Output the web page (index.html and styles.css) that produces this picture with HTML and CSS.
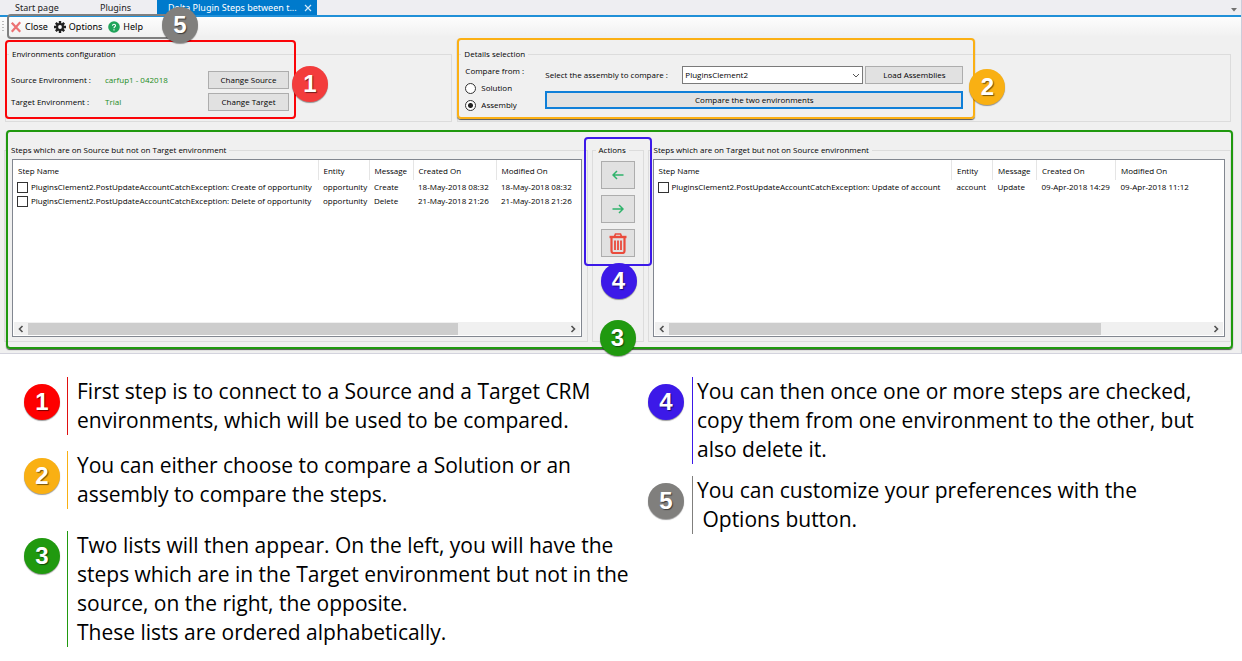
FILE: index.html
```html
<!DOCTYPE html>
<html lang="en">
<head>
<meta charset="utf-8">
<title>Delta Plugin Steps</title>
<link rel="stylesheet" href="styles.css">
</head>
<body>
<main class="app">
  <nav class="tabs">
    <button class="tab tab-start">Start page</button>
    <button class="tab tab-plugins">Plugins</button>
    <button class="tab tab-active"><span>Delta Plugin Steps between t...</span>
      <svg class="tab-close" viewBox="0 0 8 8"><path d="M1 1l6 6M7 1l-6 6" stroke="#d6ebfa" stroke-width="1.2"/></svg>
    </button>
    <svg class="tab-menu" viewBox="0 0 6 4"><path d="M0 0h6L3 3.500z" fill="#717171"/></svg>
  </nav>

  <div class="toolbar">
    <span class="grip"></span>
    <div class="tools">
      <button class="tool"><svg class="icon" viewBox="0 0 12 12"><path d="M2.500 2.500l7 7.500M9.500 2L2.500 10" stroke="#ec7273" stroke-width="2.200" stroke-linecap="square"/></svg>Close</button>
      <button class="tool"><svg class="icon" viewBox="0 0 12 12"><g stroke="#222" stroke-width="2.400"><path d="M6 0v12M0 6h12M1.800 1.800l8.400 8.400M10.200 1.800l-8.400 8.400"/></g><circle cx="6" cy="6" r="4" fill="#222"/><circle cx="6" cy="6" r="1.900" fill="#fafafa"/></svg>Options</button>
      <button class="tool"><svg class="icon" viewBox="0 0 12 12"><circle cx="6" cy="6" r="5.800" fill="#20a45a"/><path d="M4.500 4.800c0-2.200 3.200-2 3 0C7.400 5.900 6 5.700 6 7.200M6 8.200v1.200" fill="none" stroke="#fff" stroke-width="1.100"/></svg>Help</button>
      <span class="frame frame-gray"></span>
      <span class="badge gray pin-tools">5</span>
    </div>
  </div>

  <div class="settings">
    <fieldset class="group environments">
      <legend>Environments configuration</legend>
      <div class="env-grid">
        <span>Source Environment :</span><span class="ok">carfup1 - 042018</span><button class="btn">Change Source</button>
        <span>Target Environment :</span><span class="ok">Trial</span><button class="btn">Change Target</button>
        <span class="frame frame-red"></span>
        <span class="badge coral pin-env">1</span>
      </div>
    </fieldset>

    <fieldset class="group details">
      <legend>Details selection</legend>
      <div class="details-body">
        <div class="compare-from">
          <span>Compare from :</span>
          <label><input type="radio" name="from">Solution</label>
          <label><input type="radio" name="from" checked>Assembly</label>
        </div>
        <div class="assembly">
          <div class="assembly-row">
            <label class="assembly-label" for="assembly">Select the assembly to compare :</label>
            <div class="select-wrap">
              <select id="assembly"><option>PluginsClement2</option></select>
              <svg class="chevron" viewBox="0 0 8 5"><path d="M1 1l3 3 3-3" fill="none" stroke="#555"/></svg>
            </div>
            <button class="btn load">Load Assemblies</button>
          </div>
          <button class="btn compare">Compare the two environments</button>
        </div>
        <span class="frame frame-amber"></span>
        <span class="badge amber pin-details">2</span>
      </div>
    </fieldset>
  </div>

  <div class="lists">
    <fieldset class="group">
      <legend>Steps which are on Source but not on Target environment</legend>
      <div class="listbox">
        <table>
          <colgroup><col class="c-name-l"><col class="c-entity-l"><col class="c-message"><col class="c-date-l"><col></colgroup>
          <thead><tr><th>Step Name</th><th>Entity</th><th>Message</th><th>Created On</th><th>Modified On</th></tr></thead>
          <tbody>
            <tr><td><label><input type="checkbox">PluginsClement2.PostUpdateAccountCatchException: Create of opportunity</label></td><td>opportunity</td><td>Create</td><td>18-May-2018 08:32</td><td>18-May-2018 08:32</td></tr>
            <tr><td><label><input type="checkbox">PluginsClement2.PostUpdateAccountCatchException: Delete of opportunity</label></td><td>opportunity</td><td>Delete</td><td>21-May-2018 21:26</td><td>21-May-2018 21:26</td></tr>
          </tbody>
        </table>
        <div class="scroll">
          <svg class="arrow" viewBox="0 0 6 8"><path d="M4.500 1L1.500 4l3 3" fill="none" stroke="#505050" stroke-width="1.600"/></svg>
          <span class="track"><span class="thumb"></span></span>
          <svg class="arrow" viewBox="0 0 6 8"><path d="M1.500 1l3 3-3 3" fill="none" stroke="#505050" stroke-width="1.600"/></svg>
        </div>
      </div>
    </fieldset>

    <fieldset class="group actions">
      <legend>Actions</legend>
      <div class="action-buttons">
        <button class="btn action" aria-label="Copy to source"><svg class="way" viewBox="0 0 12 10"><path d="M11.500 5H1M5 1L1 5l4 4" fill="none" stroke="#2fb36b" stroke-width="1.500"/></svg></button>
        <button class="btn action" aria-label="Copy to target"><svg class="way" viewBox="0 0 12 10"><path d="M.5 5H11M7 1l4 4-4 4" fill="none" stroke="#2fb36b" stroke-width="1.500"/></svg></button>
        <button class="btn action" aria-label="Delete"><svg class="trash" viewBox="0 0 18 21"><g fill="none" stroke="#ea4b3c"><path d="M.5 4h17" stroke-width="2.400"/><path d="M5.500 3.500L6.500 1h5l1 2.500" stroke-width="1.700"/><path d="M2.500 5v13q0 2 2 2h9q2 0 2-2V5" stroke-width="2.200"/><path d="M6 7.500v9.500M9 7.500v9.500M12 7.500v9.500" stroke-width="1.800"/></g></svg></button>
        <span class="frame frame-blue"></span>
        <span class="badge blue pin-actions">4</span>
      </div>
    </fieldset>

    <fieldset class="group target-list">
      <legend>Steps which are on Target but not on Source environment</legend>
      <div class="listbox">
        <table>
          <colgroup><col class="c-name-r"><col class="c-entity-r"><col class="c-message"><col class="c-date-r"><col></colgroup>
          <thead><tr><th>Step Name</th><th>Entity</th><th>Message</th><th>Created On</th><th>Modified On</th></tr></thead>
          <tbody>
            <tr><td><label><input type="checkbox">PluginsClement2.PostUpdateAccountCatchException: Update of account</label></td><td>account</td><td>Update</td><td>09-Apr-2018 14:29</td><td>09-Apr-2018 11:12</td></tr>
          </tbody>
        </table>
        <div class="scroll">
          <svg class="arrow" viewBox="0 0 6 8"><path d="M4.500 1L1.500 4l3 3" fill="none" stroke="#505050" stroke-width="1.600"/></svg>
          <span class="track"><span class="thumb"></span></span>
          <svg class="arrow" viewBox="0 0 6 8"><path d="M1.500 1l3 3-3 3" fill="none" stroke="#505050" stroke-width="1.600"/></svg>
        </div>
      </div>
    </fieldset>
    <span class="frame frame-green"></span>
    <span class="badge green pin-lists">3</span>
  </div>
</main>

<section class="notes">
  <div class="notes-left">
    <div class="note note-red"><span class="badge red">1</span><p>First step is to connect to a Source and a Target CRM<br>environments, which will be used to be compared.</p></div>
    <div class="note note-amber"><span class="badge amber">2</span><p>You can either choose to compare a Solution or an<br>assembly to compare the steps.</p></div>
    <div class="note note-green"><span class="badge green">3</span><p>Two lists will then appear. On the left, you will have the<br>steps which are in the Target environment but not in the<br>source, on the right, the opposite.<br>These lists are ordered alphabetically.</p></div>
  </div>
  <div class="notes-right">
    <div class="note note-blue"><span class="badge blue">4</span><p>You can then once one or more steps are checked,<br>copy them from one environment to the other, but<br>also delete it.</p></div>
    <div class="note note-gray"><span class="badge gray">5</span><p>You can customize your preferences with the<br>&nbsp;Options button.</p></div>
  </div>
</section>
</body>
</html>
```

FILE: styles.css
```css
* { box-sizing: border-box; }
body { margin: 0; background: #fff; color: #000; font-family: "Open Sans", "Noto Sans", sans-serif; font-size: 8px; line-height: 12px; }
button, select, input { font: inherit; color: inherit; margin: 0; }
button { padding: 0; border: 0; background: none; white-space: nowrap; }
svg { display: block; flex: none; }

.app { background: #f0f0f0; border-right: 1px solid #ccccda; border-bottom: 1px solid #d3d3dd; }

.tabs { display: flex; height: 17px; background: #eeeef2; border-bottom: 2px solid #2090d8; font-family: "Noto Sans", sans-serif; font-size: 9px; }
.tab { text-align: left; color: #222; line-height: 15px; }
.tab-start { padding-left: 15px; width: 100px; }
.tab-plugins { width: 57px; }
.tab-active { display: flex; align-items: center; justify-content: space-between; width: 160px; padding: 0 5px 0 11px; background: #007acc; color: #fff; }
.tab-close { width: 8px; height: 8px; }
.tab-menu { width: 6px; height: 4px; margin: 8px 4px 0 auto; }

.toolbar { display: flex; align-items: center; height: 19px; padding-left: 2px; background: linear-gradient(#fdfdfd, #f1f1f1); }
.grip { width: 2px; height: 12px; background: repeating-linear-gradient(#bbb 0 1px, transparent 1px 3px); }
.tools { position: relative; display: flex; gap: 6px; margin-left: 6px; font-family: "Noto Sans", sans-serif; font-size: 9px; }
.tool { display: flex; align-items: center; gap: 3px; }
.icon { width: 12px; height: 12px; }

.frame { position: absolute; border: 2px solid; border-radius: 4px; pointer-events: none; }
.frame-gray { inset: -7px -27px -6px -3px; border-color: #7f7f7f; }
.frame-red { inset: -31px -7px -8px -6px; border-color: #fb0408; }
.frame-amber { inset: -27px -10px -8px -8px; border-color: #fbb014; box-shadow: 0 1px 1px #555; }
.frame-blue { inset: -24px -17px -9px; border-color: #3c19e8; }
.frame-green { inset: 8px 8px 4px 6px; border-color: #20990f; box-shadow: 0 1px 1px #555; }

.badge { display: flex; align-items: center; justify-content: center; flex: none; width: 36px; height: 36px; border-radius: 50%; color: #fff; font: bold 24px/36px "Liberation Sans", sans-serif; text-shadow: 1px 1px 1px #0008; box-shadow: 0 1px 1px #0006; }
.red { background: #fe0000; }
.coral { background: #f33c3c; }
.amber { background: #f9b013; }
.green { background: #20990f; }
.blue { background: #3c19e8; }
.gray { background: #807f7d; }
.pin-tools, .pin-env, .pin-details, .pin-actions, .pin-lists { position: absolute; z-index: 2; }
.pin-tools { right: -55px; top: -14px; }
.pin-env { right: -39px; top: -5px; }
.pin-details { right: -40px; top: 4px; }
.pin-actions { left: 0; bottom: -42px; }
.pin-lists { left: 50%; margin-left: -21px; bottom: -3px; }

.settings { display: grid; grid-template-columns: 447fr 773fr; gap: 5px; padding: 12px 10px 0 5px; }
.group { min-width: 0; margin: 0; padding: 0 5px 4px; border: 1px solid #dcdcdc; }
.group legend { padding: 0 3px; margin-left: -2px; }
.settings .group { padding-bottom: 10px; }

.env-grid { position: relative; display: grid; grid-template-columns: 94px 1fr 81px; gap: 4px 0; align-items: center; width: 278px; margin-top: 11px; white-space: nowrap; }
.ok { color: #1c8c1c; }
.btn { height: 18px; border: 1px solid #adadad; background: #e1e1e1; text-align: center; }

.details { padding: 0 7px; }
.details legend { margin-left: -4px; }
.details-body { position: relative; display: flex; width: 66%; padding-right: 2px; margin-top: 5px; }
.compare-from { display: flex; flex-direction: column; gap: 5px; width: 80px; }
.compare-from label { display: flex; align-items: center; gap: 5px; }
input[type="radio"] { appearance: none; width: 11px; height: 11px; border: 1px solid #333; border-radius: 50%; background: #fff; }
input[type="radio"]:checked { background: radial-gradient(circle, #222 0 2px, #fff 3px); }
.assembly { flex: 1; display: flex; flex-direction: column; gap: 7px; margin-top: 1px; }
.assembly-row { display: flex; align-items: center; gap: 2px; }
.assembly-label { width: 135px; white-space: nowrap; }
.select-wrap { position: relative; flex: 1; }
select { appearance: none; display: block; width: 100%; height: 18px; padding: 0 2px; border: 1px solid #7a7a7a; border-radius: 0; background: #fff; }
.chevron { position: absolute; right: 3px; top: 7px; width: 8px; height: 5px; }
.load { width: 98px; }
.compare { border: 2px solid #0f7fd8; }

.lists { position: relative; display: grid; grid-template-columns: 1fr 52px 1fr; gap: 4px; padding: 22px 10px 11px 4px; }
.listbox { display: flex; flex-direction: column; justify-content: space-between; height: 178px; margin: 3px 0 0 2px; border: 1px solid #828790; background: #fff; }
.target-list { padding-left: 4px; }
.target-list .listbox { margin-left: 0; }
table { width: 100%; table-layout: fixed; border-collapse: collapse; white-space: nowrap; }
th, td { padding: 0 0 0 5px; font-weight: normal; text-align: left; }
th { height: 20px; padding-top: 2px; border-left: 1px solid #e5e5e5; }
th:first-child { border-left: 0; }
td { height: 14px; }
td:first-child { padding-left: 4px; }
td label { display: flex; align-items: center; gap: 3px; }
.c-name-l { width: 305px; }
.c-entity-l { width: 51px; }
.c-message { width: 44px; }
.c-date-l { width: 83px; }
.c-name-r { width: 298px; }
.c-entity-r { width: 41px; }
.c-date-r { width: 79px; }
input[type="checkbox"] { appearance: none; flex: none; width: 11px; height: 11px; border: 1px solid #333; background: #fff; }
.scroll { display: flex; align-items: center; height: 13px; margin: 0 1px 1px; background: #f0f0f0; }
.arrow { width: 6px; height: 8px; margin: 0 4px; }
.track { flex: 1; height: 12px; }
.thumb { display: block; width: 80%; height: 12px; background: #cdcdcd; }
.actions { padding: 0; }
.actions legend { margin-left: 3px; }
.action-buttons { position: relative; display: flex; flex-direction: column; gap: 6px; margin: 5px 8px 0; }
.action { display: flex; align-items: center; justify-content: center; height: 28px; }
.way { width: 12px; height: 10px; }
.trash { width: 18px; height: 21px; }

.notes { display: grid; grid-template-columns: minmax(0, 624fr) minmax(0, 618fr); padding-top: 23px; font: 21px/29px "Open Sans", "Noto Sans", sans-serif; }
.notes-left { display: flex; flex-direction: column; gap: 16px; padding-left: 24px; }
.notes-right { display: flex; flex-direction: column; gap: 12px; padding-left: 24px; }
.note { display: flex; gap: 7px; white-space: nowrap; }
.note .badge { margin-top: 7px; }
.note p { margin: 0; padding-left: 9px; border-left: 1px solid; }
.note-red p { border-color: #e01010; }
.note-amber p { border-color: #f9b013; }
.note-green p { border-color: #20990f; }
.note-blue p { border-color: #3c19e8; }
.note-gray p { border-color: #807f7d; }
.note-green { margin-top: 6px; }
.notes-right .note { gap: 8px; }
.notes-right p { padding-left: 4px; }
```
